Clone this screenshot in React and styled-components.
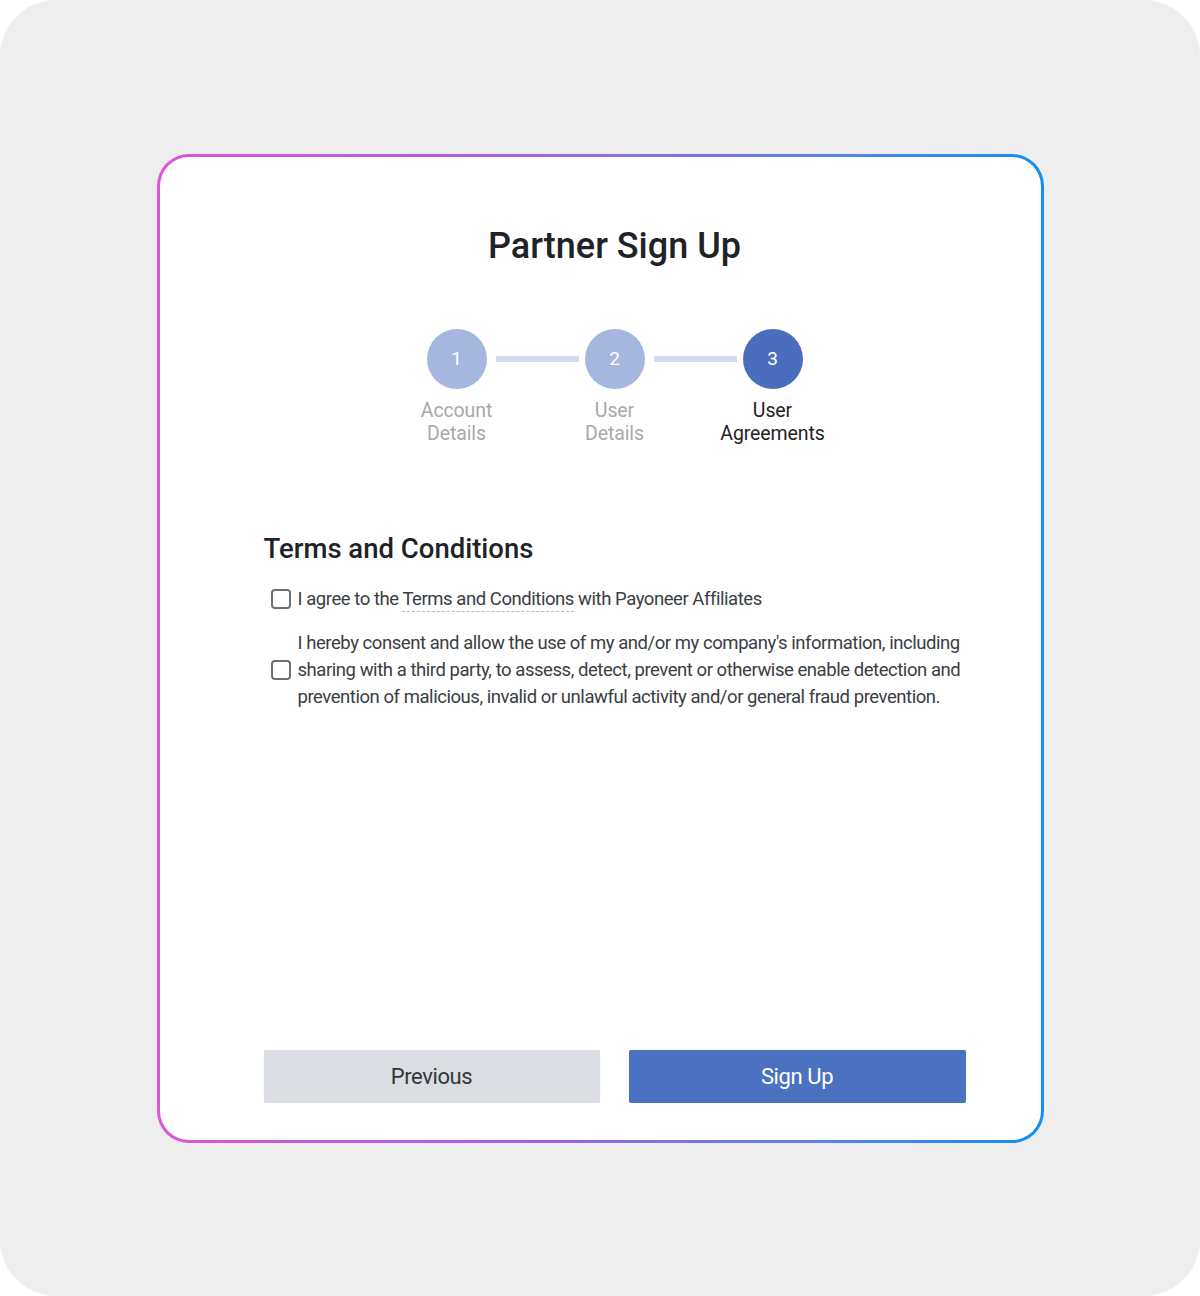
import React, { useState } from 'react'
import styled, { createGlobalStyle } from 'styled-components'

const Global = createGlobalStyle`
    html, body {
        margin: 0;
        padding: 0;
        background: #ffffff;
    }
    body {
        font-family: Roboto, "Liberation Sans", sans-serif;
    }
`

const Page = styled.div`
    width: 1200px;
    height: 1296px;
    background: #eeeeee;
    border-radius: 56px;
    display: flex;
    align-items: center;
    justify-content: center;
`

const Card = styled.div`
    box-sizing: border-box;
    width: 887px;
    height: 989px;
    border: 3px solid transparent;
    border-radius: 32px;
    background:
        linear-gradient(#ffffff, #ffffff) padding-box,
        linear-gradient(90deg, #dc56d8, #b05ee0 35%, #5a82ea 75%, #0f90f2) border-box;
    padding: 65px 75px 37px 104px;
    display: flex;
    flex-direction: column;
`

const Title = styled.h1`
    margin: 0;
    text-align: center;
    font-size: 36px;
    font-weight: 500;
    line-height: 48px;
    color: #1f2226;
`

const Stepper = styled.div`
    display: flex;
    justify-content: center;
    margin-top: 59px;
`

const Step = styled.div`
    position: relative;
    width: 158px;
    display: flex;
    flex-direction: column;
    align-items: center;

    &:not(:last-child)::after {
        content: '';
        position: absolute;
        top: 27px;
        left: calc(50% + 39px);
        width: 83px;
        height: 6px;
        background: #d3dcf0;
    }
`

const Circle = styled.div`
    width: 60px;
    height: 60px;
    border-radius: 50%;
    background: ${p => (p.active ? '#4a6ebd' : '#a5b7df')};
    color: #ffffff;
    font-size: 19px;
    display: flex;
    align-items: center;
    justify-content: center;
`

const StepLabel = styled.div`
    margin-top: 10px;
    text-align: center;
    font-size: 19.5px;
    line-height: 23px;
    letter-spacing: -0.1px;
    white-space: pre-line;
    color: ${p => (p.active ? '#1f2226' : '#a9a9a9')};
`

const Section = styled.div`
    margin-top: 87px;
`

const SectionTitle = styled.h2`
    margin: 0;
    font-size: 27.5px;
    font-weight: 500;
    line-height: 34px;
    color: #1f2226;
`

const Agreement = styled.label`
    display: flex;
    align-items: center;
    gap: 7px;
    padding-left: 7px;
    margin-top: ${p => p.gap}px;
    font-size: 18.5px;
    line-height: 27px;
    letter-spacing: -0.45px;
    color: #3a3d42;
    cursor: pointer;
`

const Box = styled.input`
    appearance: none;
    flex: none;
    width: 20px;
    height: 20px;
    margin: 0;
    border: 2px solid #707070;
    border-radius: 4px;
    background: #ffffff;
    cursor: pointer;

    &:checked {
        background: #4a6ebd;
        border-color: #4a6ebd;
    }
`

const TermsLink = styled.span`
    color: #3a3d42;
    border-bottom: 1px dashed #b9bcc2;
    padding-bottom: 1px;
`

const Actions = styled.div`
    margin-top: auto;
    display: grid;
    grid-template-columns: 336px 337px;
    justify-content: space-between;
`

const Button = styled.button`
    height: 53px;
    border: none;
    border-radius: 2px;
    font-family: Roboto, "Liberation Sans", sans-serif;
    font-size: 22px;
    letter-spacing: -0.4px;
    cursor: pointer;
    background: ${p => (p.primary ? '#4b72c0' : '#dadee2')};
    color: ${p => (p.primary ? '#ffffff' : '#33363a')};
    box-shadow: 0 0 1px rgba(0, 0, 0, 0.2);
`

const steps = [
    { n: 1, label: 'Account\nDetails' },
    { n: 2, label: 'User\nDetails' },
    { n: 3, label: 'User\nAgreements', active: true },
]

function App() {
    const [terms, setTerms] = useState(false)
    const [consent, setConsent] = useState(false)

    return (
        <>
            <Global />
            <Page>
                <Card>
                    <Title>Partner Sign Up</Title>
                    <Stepper>
                        {steps.map(s => (
                            <Step key={s.n}>
                                <Circle active={s.active}>{s.n}</Circle>
                                <StepLabel active={s.active}>{s.label}</StepLabel>
                            </Step>
                        ))}
                    </Stepper>

                    <Section>
                        <SectionTitle>Terms and Conditions</SectionTitle>
                        <Agreement gap={20}>
                            <Box type="checkbox" checked={terms} onChange={e => setTerms(e.target.checked)} />
                            <span>
                                I agree to the <TermsLink>Terms and Conditions</TermsLink> with Payoneer Affiliates
                            </span>
                        </Agreement>
                        <Agreement gap={17}>
                            <Box type="checkbox" checked={consent} onChange={e => setConsent(e.target.checked)} />
                            <span>
                                I hereby consent and allow the use of my and/or my company's information, including
                                sharing with a third party, to assess, detect, prevent or otherwise enable detection and
                                prevention of malicious, invalid or unlawful activity and/or general fraud prevention.
                            </span>
                        </Agreement>
                    </Section>

                    <Actions>
                        <Button>Previous</Button>
                        <Button primary>Sign Up</Button>
                    </Actions>
                </Card>
            </Page>
        </>
    )
}

export default App
